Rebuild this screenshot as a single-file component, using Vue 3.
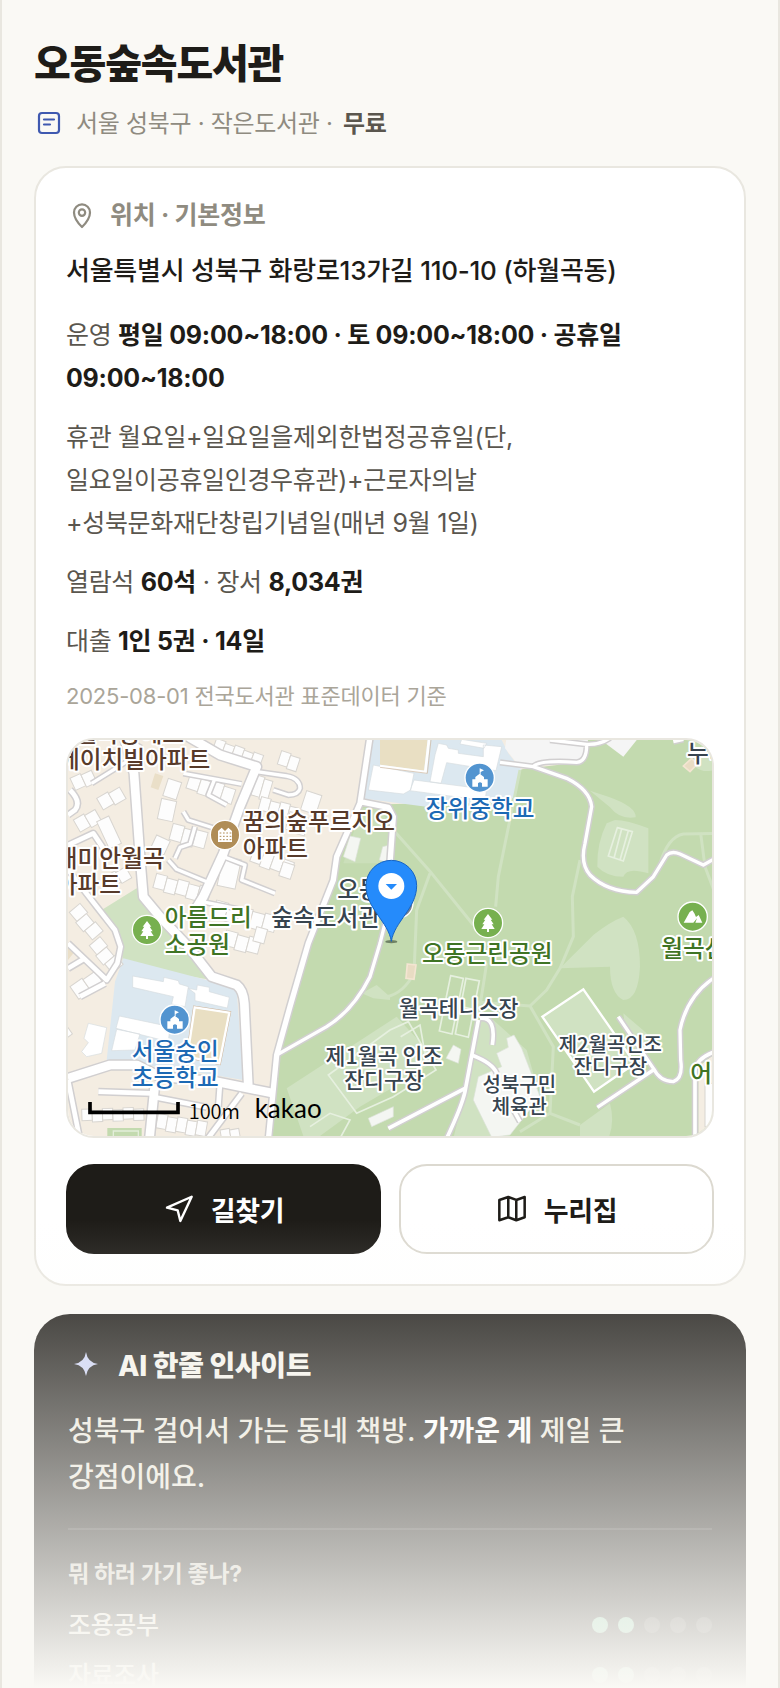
<!--src/views/LibraryDetail.vue-->
<script setup>
// Basic info rows
const library = {
  name: "오동숲속도서관",
  meta: "서울 성북구 · 작은도서관 · ",
  fee: "무료",
  address: "서울특별시 성북구 화랑로13가길 110-10 (하월곡동)",
  hours: "평일 09:00~18:00 · 토 09:00~18:00 · 공휴일 09:00~18:00",
  closed: "월요일+일요일을제외한법정공휴일(단, 일요일이공휴일인경우휴관)+근로자의날+성북문화재단창립기념일(매년 9월 1일)",
  seats: "60석",
  books: "8,034권",
  loan: "1인 5권 · 14일",
  source: "2025-08-01 전국도서관 표준데이터 기준"
};

const scores = [
  { label: "조용공부", value: 2 },
  { label: "자료조사", value: 2 }
];

// Map geometry (3 units per px)
const roads = [
  { w: 10, d: "M370 130 L545 162 M465 145 L445 195 L500 225 M370 245 L385 270 L480 300 M345 385 L360 352 L390 342 L405 290 M325 390 L350 418 L440 455 M490 380 L555 405 L545 450 L645 490 M410 512 L550 540 M95 160 L200 95 M590 125 L680 138 Q720 145 720 175 Q715 195 685 195 L640 180" },
  { w: 14, d: "M25 345 L100 310 L150 385 M30 180 Q65 215 45 240 L24 255 M25 420 L110 530 L165 600 L182 650 L172 700 L140 750 L24 640 M60 800 L135 760 M24 715 L75 685 M115 1085 L275 1090 M285 1102 L440 1132 M480 1060 L475 1130 M545 1090 L440 1230 M24 1050 L60 1230" },
  { w: 26, d: "M195 30 L222 130 L240 380 L250 500 L300 560 L385 650 L455 740 L530 765 Q550 780 553 820 L565 1070 M24 1045 L150 1005 L230 1005 L300 1040 L470 1055 L640 1090 M285 1060 L268 1230 M240 60 L205 40 M385 20 L480 75 L590 110 L540 230 L490 370 L430 500 L405 540" },
  { w: 16, d: "M930 20 L900 220 L830 380 L820 450 L745 640 L690 830 L650 975 L625 1230 M900 215 L985 232 L1000 260 L990 400" },
  { w: 10, d: "M1320 97 L1420 110 L1520 145 Q1590 180 1595 230 L1575 340 Q1560 400 1590 435 Q1640 485 1730 487 L1780 440 L1820 375 Q1835 362 1860 372 L1930 405 L1965 385 M1420 110 Q1435 90 1550 97 Q1580 95 1580 45 M1470 30 L1580 43 Q1620 45 1650 24 M1840 35 L1870 28" },
  { w: 10, d: "M650 975 L800 890 Q880 840 930 740 L960 640 L985 540 M1675 860 L1780 1015 Q1800 1055 1840 1055 Q1870 1045 1862 990 L1860 900 Q1880 800 1960 745 M1780 1020 L1612 1132" },
  { w: 11, d: "M1255 870 L1215 1085 Q1205 1130 1160 1225 M985 1195 L1215 1075 M1260 865 Q1310 860 1297 945 M1235 975 Q1300 1000 1310 1030 M1355 1130 L1380 1175 M1905 1225 L1905 1020 Q1910 985 1965 965" }
];

const paths = "M1380 120 L1315 440 L1307 530 M1000 300 L1115 430 L1240 585 M1110 430 L1070 540 L1062 730 Q1030 790 980 800 M1560 390 L1537 500 L1540 620 L1500 715 L1460 780 L1410 828 L1240 815 M1800 400 Q1825 320 1870 312 L1965 310 M1922 310 L1935 410 L1965 490 M1410 828 L1480 950 L1470 1150 L1380 1205 M1470 1150 L1560 1185 M1280 700 L1255 860";

// rows of small houses
const blocks = [
  { x: 470, y: 25, a: 20, n: 5, w: 30, h: 45 },
  { x: 665, y: 62, a: 18, n: 2, w: 30, h: 42 },
  { x: 392, y: 130, a: 18, n: 4, w: 36, h: 46 },
  { x: 590, y: 135, a: 16, n: 2, w: 26, h: 62 },
  { x: 325, y: 145, a: 18, n: 1, w: 42, h: 54 },
  { x: 305, y: 205, a: 12, n: 1, w: 46, h: 62 },
  { x: 110, y: 205, a: -30, n: 2, w: 38, h: 40 },
  { x: 605, y: 200, a: 15, n: 4, w: 30, h: 40 },
  { x: 740, y: 182, a: 18, n: 1, w: 48, h: 60 },
  { x: 690, y: 245, a: 15, n: 2, w: 30, h: 54 },
  { x: 340, y: 280, a: 15, n: 3, w: 36, h: 50 },
  { x: 290, y: 315, a: 25, n: 1, w: 45, h: 45 },
  { x: 290, y: 430, a: 15, n: 5, w: 34, h: 44 },
  { x: 490, y: 378, a: 12, n: 1, w: 55, h: 90 },
  { x: 585, y: 350, a: 20, n: 4, w: 32, h: 46 },
  { x: 670, y: 395, a: 18, n: 1, w: 36, h: 44 },
  { x: 470, y: 510, a: 15, n: 5, w: 38, h: 50 },
  { x: 500, y: 600, a: 15, n: 3, w: 36, h: 46 },
  { x: 30, y: 145, a: -25, n: 2, w: 34, h: 40 },
  { x: 40, y: 270, a: -30, n: 2, w: 36, h: 42 },
  { x: 110, y: 275, a: -25, n: 1, w: 40, h: 90 },
  { x: 60, y: 520, a: 50, n: 3, w: 36, h: 42 },
  { x: 135, y: 440, a: -30, n: 2, w: 34, h: 38 },
  { x: 30, y: 770, a: -35, n: 2, w: 44, h: 46 },
  { x: 120, y: 620, a: 50, n: 3, w: 36, h: 42 },
  { x: 0, y: 850, a: 55, n: 2, w: 36, h: 42 },
  { x: 65, y: 1138, a: -2, n: 6, w: 31, h: 34 },
  { x: 295, y: 1150, a: 10, n: 5, w: 30, h: 44 },
  { x: 480, y: 1200, a: -10, n: 2, w: 28, h: 40 },
  { x: 590, y: 590, a: 15, n: 1, w: 34, h: 44 },
  { x: 1935, y: 1060, a: 0, n: 1, w: 40, h: 130 }
];

const labels = [
  { t: "월곡동에스", x: 372, y: 36, k: "home", end: true },
  { t: "에이치빌아파트", x: 451, y: 115, k: "home", end: true },
  { t: "래미안월곡", x: 314, y: 412, k: "home", end: true },
  { t: "아파트", x: 183, y: 490, k: "home", end: true },
  { t: "꿈의숲푸르지오", x: 548, y: 301, k: "home" },
  { t: "아파트", x: 548, y: 380, k: "home" },
  { t: "아름드리", x: 314, y: 588, k: "park" },
  { t: "소공원", x: 314, y: 668, k: "park" },
  { t: "오동", x: 832, y: 505, k: "place" },
  { t: "숲속도서관", x: 634, y: 588, k: "place" },
  { t: "장위중학교", x: 1097, y: 262, k: "school" },
  { t: "누리", x: 1881, y: 97, k: "place" },
  { t: "오동근린공원", x: 1086, y: 697, k: "park" },
  { t: "월곡산", x: 1804, y: 681, k: "park" },
  { t: "월곡테니스장", x: 1017, y: 859, k: "place mid" },
  { t: "제1월곡 인조", x: 972, y: 1001, k: "place mid", mid: true },
  { t: "잔디구장", x: 972, y: 1075, k: "place mid", mid: true },
  { t: "제2월곡인조", x: 1651, y: 966, k: "place small", mid: true },
  { t: "잔디구장", x: 1651, y: 1032, k: "place small", mid: true },
  { t: "성북구민", x: 1378, y: 1087, k: "place small", mid: true },
  { t: "체육관", x: 1378, y: 1153, k: "place small", mid: true },
  { t: "어린이", x: 1891, y: 1056, k: "park" },
  { t: "서울숭인", x: 346, y: 990, k: "school", mid: true },
  { t: "초등학교", x: 346, y: 1068, k: "school", mid: true }
];

const anchor = (l) => (l.end ? "end" : l.mid ? "middle" : "start");
</script>

<template>
  <main class="sheet">
    <header class="head">
      <h1 class="head__title">{{ library.name }}</h1>
      <div class="head__meta">
        <svg class="head__icon" viewBox="0 0 28 28" fill="none" stroke="currentColor" stroke-width="2.2" stroke-linecap="round">
          <rect x="5" y="3" width="20" height="20" rx="3"/>
          <path d="M10 9.5H20M10 14.5H16"/>
        </svg>
        <span>{{ library.meta }} <b>{{ library.fee }}</b></span>
      </div>
    </header>

    <section class="card">
      <h2 class="card__head">
        <svg viewBox="0 0 32 32" fill="none" stroke="currentColor" stroke-width="2.2" stroke-linejoin="round">
          <path d="M16 28C13 25 8 20 8 13.4a8 8 0 0 1 16 0C24 20 19 25 16 28Z"/>
          <circle cx="16" cy="13.6" r="3.2"/>
        </svg>
        위치 · 기본정보
      </h2>
      <p class="card__address">{{ library.address }}</p>
      <p class="card__row">운영 <b>{{ library.hours }}</b></p>
      <p class="card__row">휴관 {{ library.closed }}</p>
      <p class="card__row">열람석 <b>{{ library.seats }}</b> · 장서 <b>{{ library.books }}</b></p>
      <p class="card__row">대출 <b>{{ library.loan }}</b></p>
      <p class="card__source">{{ library.source }}</p>

      <div class="map">
        <svg class="map__svg" viewBox="24 30 1932 1188" preserveAspectRatio="xMidYMid slice">
          <rect x="0" y="0" width="2000" height="1300" fill="#f4ede2"/>

          <!-- parks -->
          <path fill="#c3daaf" d="M905 225L1355 212L1360 150L1385 118L1575 95L1585 20H2000V1300H620L650 975L745 640L830 400Z"/>
          <path fill="#d0e2c2" d="M125 540L230 475L300 560L455 750L190 705L182 640Z"/>
          <path fill="#c3daaf" d="M142 1194H245V1230H142Z"/>
          <path fill="none" stroke="#e3eeda" stroke-width="4" d="M160 1230V1203H235V1230"/>

          <!-- school grounds -->
          <path fill="#dce8f0" d="M940 20H1320L1345 70L1383 118L1360 205L1110 232L905 205Z"/>
          <path fill="#f5f5f5" d="M1340 20H1585L1575 92L1425 105L1383 115L1335 55ZM1630 35L1690 80L1735 24H1640Z"/>
          <path fill="#dce8f0" d="M190 685L440 750L530 780L550 1050L370 1020L140 990L165 755Z"/>
          <g fill="#fff" stroke="#d6dce0" stroke-width="2">
            <path d="M1125 75L1135 40L1160 45L1165 55L1195 60V70L1270 80V45L1325 50L1308 122L1160 98L1143 160L1110 155ZM1205 28L1280 40L1272 55L1200 42ZM1062 150L1280 178L1275 212L1050 182ZM940 105L1062 130L1052 180L1030 192L925 180Z"/>
            <path d="M218 738L310 755L312 742L355 752L358 762L385 770L375 830L335 822L340 800L218 772ZM385 775L410 780L412 765L448 772V785L508 802L502 834L405 812V790ZM178 858L330 890L325 935L168 895ZM170 898L240 912L225 960L155 962ZM85 880L140 893L125 970L80 980L65 965L85 938L72 925Z"/>
          </g>
          <path fill="#e9dfc3" d="M960 20H1104L1092 122L960 104Z"/>
          <path fill="none" stroke="#fff" stroke-width="8" d="M960 108L1096 126L1108 20"/>
          <path fill="none" stroke="#cdb59c" stroke-width="2" d="M960 112L1102 130L1114 20"/>
          <path fill="#e9dfc3" stroke="#cdb59c" stroke-width="10" d="M404 832L508 848L478 1000L382 980Z"/>
          <path fill="#e9dfc3" stroke="#fff" stroke-width="7" d="M404 832L508 848L478 1000L382 980Z"/>
          <path fill="#eadfc8" d="M285 130L310 138L295 180L272 172ZM24 640L48 660L24 690Z"/>

          <!-- lighter grass -->
          <g fill="#d0e2c2">
            <path d="M1590 182L1645 200Q1730 230 1727 262Q1680 270 1650 232ZM1665 270Q1700 270 1765 295L1765 430Q1700 410 1690 440Q1640 440 1612 410Q1610 340 1640 280Z"/>
            <path d="M1500 715L1600 615Q1650 575 1690 560Q1740 600 1740 710Q1735 810 1690 810Q1650 790 1650 710Z"/>
            <path d="M680 1075L1010 860L1130 990L1020 1060L900 1130L780 1218H730ZM1260 870H1300L1400 960L1440 1100L1320 1225H1180L1235 1000ZM1690 850L1760 910L1760 1000L1700 930ZM1560 1185L1650 1120Q1665 1180 1645 1225H1560ZM905 790L950 765L990 800V810L940 805Z"/>
            <path d="M905 235L960 232L1000 310L985 400L850 400Z" opacity=".6"/>
            <path d="M1905 75Q1930 30 1960 40V120Q1930 130 1905 110Z"/>
          </g>
          <path fill="none" stroke="#d0e2c2" stroke-width="9" stroke-linejoin="round" :d="paths"/>
          <g fill="none" stroke="#e6f0df" stroke-width="5">
            <path d="M1672 293L1717 305L1690 393L1645 378ZM1685 297L1662 385M1705 302L1680 390"/>
            <path d="M1172 737L1210 745L1176 912L1138 903ZM1218 745L1258 753L1225 922L1186 912ZM1155 820L1195 828M1203 830L1240 838"/>
            <path d="M805 1035L990 900L1045 875L1128 1020L1000 1100L890 1150ZM1022 920L1080 885L1100 1000M750 1190L810 1150L870 1170L840 1225"/>
          </g>
          <path fill="#d0e2c2" stroke="#fff" stroke-width="7" d="M1447 860L1570 778L1725 1000L1602 1085Z"/>
          <path fill="#f4f6f2" stroke="#dde2da" stroke-width="2" d="M1310 970L1345 952L1340 925L1362 915L1385 955L1410 1020L1440 1100L1350 1215L1295 1222L1240 1110L1255 1040L1325 1010ZM1158 985L1180 945L1203 958L1195 1000ZM850 380L870 318L902 325L885 395ZM958 390L968 350L990 345V400ZM925 1165L1000 1130V1160L935 1190Z"/>
          <path fill="#e9dcc3" stroke="#f4e5d2" stroke-width="5" d="M1042 702L1068 705L1062 748L1038 745ZM1870 108L1895 85L1912 102L1890 125Z"/>
          <path fill="#f4ede2" d="M1915 1225V1010L1960 975V1225Z"/>

          <!-- houses -->
          <g v-for="(b, i) in blocks" :key="i" :transform="`translate(${b.x} ${b.y}) rotate(${b.a})`">
            <rect
                v-for="n in b.n"
                :key="n"
                :x="(n - 1) * b.w"
                :y="n % 2 ? 0 : 5"
                :width="b.w"
                :height="b.h"
                fill="#fdfdfd"
                stroke="#d8d5d0"
                stroke-width="3"
            />
          </g>

          <!-- roads: casing first, then surface -->
          <g fill="none" stroke="#d1cfd0" stroke-linejoin="round">
            <path v-for="(r, i) in roads" :key="i" :d="r.d" :stroke-width="r.w + 9"/>
          </g>
          <g fill="none" stroke="#fff" stroke-linejoin="round">
            <path v-for="(r, i) in roads" :key="i" :d="r.d" :stroke-width="r.w"/>
          </g>

          <!-- poi badges -->
          <g stroke="#fff" stroke-width="4">
            <circle cx="1015" cy="520" r="44" fill="#77818c"/>
            <circle cx="495" cy="315" r="44" fill="#b08d57"/>
            <circle cx="1259" cy="143" r="44" fill="#5294d0"/>
            <circle cx="344" cy="869" r="44" fill="#5294d0"/>
            <circle cx="261" cy="600" r="44" fill="#77b04f"/>
            <circle cx="1284" cy="579" r="44" fill="#77b04f"/>
            <circle cx="1898" cy="560" r="44" fill="#77b04f"/>
          </g>
          <g fill="#fff">
            <path d="M474 336V303L485 293L495 303L505 293L516 303V336Z"/>
            <path stroke="#b08d57" stroke-width="3" stroke-dasharray="5 5" d="M479 309H514M479 319H514M479 329H514"/>
            <g v-for="p in [[1259, 143], [344, 869]]" :key="p[0]" :transform="`translate(${p[0]} ${p[1]})`">
              <path d="M-22 27V5H-13V-2L0 -12L13 -2V5H24V27H7V17Q1 11 -5 17V27ZM0 -28L13 -22L3 -17V-8H0Z"/>
            </g>
            <g v-for="p in [[261, 600], [1284, 579]]" :key="p[0]" :transform="`translate(${p[0]} ${p[1]})`">
              <path d="M0 -27L13 -10H8L17 4H11L20 18H3V27H-3V18H-20L-11 4H-17L-8 -10H-13Z"/>
            </g>
            <path d="M1871 578L1889 546L1897 541L1903 550L1908 561L1916 555L1927 578H1906L1911 565L1900 578Z"/>
          </g>

          <text
              v-for="(l, i) in labels"
              :key="i"
              :x="l.x"
              :y="l.y"
              :text-anchor="anchor(l)"
              :class="['map__label', ...l.k.split(' ')]"
          >{{ l.t }}</text>

          <!-- marker -->
          <ellipse cx="994" cy="635" rx="18" ry="5" fill="#40513c" opacity=".65"/>
          <path fill="#258bfb" stroke="#1664c4" stroke-width="3" d="M994 634C985 575 918 535 918 467A76 76 0 0 1 1070 467C1070 535 1003 575 994 634Z"/>
          <circle cx="994" cy="468" r="39" fill="#fff"/>
          <path fill="#258bfb" d="M977 462H1011L994 479Z"/>

          <path fill="none" stroke="#000" stroke-width="11" d="M90 1116V1147H354V1116"/>
          <text class="map__scale" x="386" y="1168">100m</text>
          <text class="map__brand" x="584" y="1163">kakao</text>
        </svg>
      </div>

      <div class="actions">
        <a class="btn btn--dark" href="#route">
          <svg viewBox="0 0 24 24" fill="none" stroke="currentColor" stroke-width="1.8" stroke-linejoin="round">
            <path d="M3 11L21.5 2.8L13 21L11 13Z"/>
          </svg>
          길찾기
        </a>
        <a class="btn" href="#site">
          <svg viewBox="0 0 24 24" fill="none" stroke="currentColor" stroke-width="1.9" stroke-linejoin="round">
            <path d="M2.500 5.200L9.200 3L15.200 5.200L21.500 3V18.200L15.200 20.400L9.200 18.200L2.500 20.400ZM9.200 3V18.200M15.200 5.200V20.400"/>
          </svg>
          누리집
        </a>
      </div>
    </section>

    <section class="insight">
      <h2 class="insight__head">
        <svg viewBox="0 0 32 32" fill="currentColor">
          <path d="M18 2Q19.500 12.500 30 14Q19.500 15.500 18 26Q16.500 15.500 6 14Q16.500 12.500 18 2Z"/>
        </svg>
        AI 한줄 인사이트
      </h2>
      <p class="insight__text">성북구 걸어서 가는 동네 책방. <b>가까운 게</b> 제일 큰 강점이에요.</p>
      <div class="insight__scores">
        <h3>뭐 하러 가기 좋나?</h3>
        <div v-for="s in scores" :key="s.label" class="score">
          <span>{{ s.label }}</span>
          <span class="score__dots">
            <i v-for="n in 5" :key="n" :class="{ on: n <= s.value }"></i>
          </span>
        </div>
      </div>
    </section>

    <div class="fade"></div>
  </main>
</template>

<style>
body {
  margin: 0;
  background: #faf9f5;
}
</style>

<style scoped>
.sheet {
  position: relative;
  box-sizing: border-box;
  height: 100vh;
  overflow: hidden;
  padding: 38px 32px 0;
  border: 0 solid #e9e7e0;
  border-width: 0 2px;
  background: #faf9f5;
  color: #1e1c18;
  font-family: Inter, "Noto Sans CJK KR", sans-serif;
  letter-spacing: -0.02em;
  word-break: keep-all;
}
h1, h2, h3, p { margin: 0; }
b { font-weight: 700; }
svg { display: block; flex: none; }

/* Header */
.head__title {
  font-size: 40px;
  line-height: 52px;
  font-weight: 800;
  letter-spacing: -0.03em;
}
.head__meta {
  display: flex;
  align-items: center;
  gap: 14px;
  margin: 16px 0 24px;
  font-size: 24px;
  line-height: 36px;
  color: #8f8b80;
}
.head__meta b { margin-left: 4px; color: #5a564e; }
.head__icon { width: 28px; height: 28px; color: #3f59b0; }

/* Info card */
.card {
  display: flex;
  flex-direction: column;
  gap: 16px;
  padding: 30px;
  border: 2px solid #e9e7e0;
  border-radius: 32px;
  background: #fff;
}
.card__head {
  display: flex;
  align-items: center;
  gap: 12px;
  font-size: 25px;
  line-height: 34px;
  font-weight: 700;
  color: #8f8b80;
}
.card__head svg { width: 32px; height: 32px; }
.card__address {
  margin-bottom: 4px;
  font-size: 26px;
  line-height: 46px;
  font-weight: 500;
  letter-spacing: -0.01em;
}
.card__row {
  font-size: 25px;
  line-height: 43px;
  color: #5a564e;
}
.card__row b { color: #1e1c18; letter-spacing: -0.01em; }
.card__source {
  font-size: 22px;
  line-height: 34px;
  letter-spacing: -0.01em;
  color: #aaa599;
}

/* Map */
.map {
  height: 396px;
  margin-top: 9px;
  border: 2px solid #e9e7e0;
  border-radius: 28px;
  overflow: hidden;
}
.map__svg { width: 100%; height: 100%; }
.map__label {
  font-family: "Noto Sans CJK KR", sans-serif;
  font-size: 71px;
  font-weight: 500;
  letter-spacing: 0;
  paint-order: stroke;
  stroke: #fff;
  stroke-width: 12px;
  stroke-linejoin: round;
}
.home { fill: #573a2a; }
.park { fill: #3f7424; }
.place { fill: #37444f; }
.school { fill: #1c69b4; }
.mid { font-size: 65px; }
.small { font-size: 60px; }
.map__scale {
  font-family: "Noto Sans CJK KR", sans-serif;
  font-size: 60px;
  font-weight: 350;
  letter-spacing: 0;
}
.map__brand {
  font-family: Lato, sans-serif;
  font-size: 78px;
  letter-spacing: 0;
}

/* Buttons */
.actions {
  display: grid;
  grid-template-columns: 1fr 1fr;
  gap: 18px;
  margin-top: 10px;
}
.btn {
  display: flex;
  align-items: center;
  justify-content: center;
  gap: 16px;
  box-sizing: border-box;
  height: 90px;
  border: 2px solid #dcd9d0;
  border-radius: 28px;
  background: #fff;
  color: #1e1c18;
  font-size: 27px;
  font-weight: 700;
  text-decoration: none;
}
.btn svg { width: 32px; height: 32px; }
.btn--dark {
  border-color: #1e1c18;
  background: #1e1c18;
  color: #fff;
}

/* AI insight */
.insight {
  margin-top: 28px;
  padding: 34px;
  border-radius: 36px;
  background: #1e1c18;
  color: #ebe8dd;
}
.insight__head {
  display: flex;
  align-items: center;
  gap: 18px;
  font-size: 28px;
  line-height: 36px;
  font-weight: 800;
  color: #f5f3ec;
}
.insight__head svg { width: 32px; height: 32px; color: #ccd3f5; }
.insight__text {
  margin-top: 24px;
  font-size: 28px;
  line-height: 46px;
  font-weight: 500;
  letter-spacing: 0;
}
.insight__text b { color: #fff; }
.insight__scores {
  display: flex;
  flex-direction: column;
  gap: 16px;
  margin-top: 28px;
  padding-top: 26px;
  border-top: 2px solid rgba(255, 255, 255, 0.12);
}
.insight__scores h3 {
  font-size: 23px;
  line-height: 36px;
  font-weight: 700;
  color: #d2cfc4;
}
.score {
  display: flex;
  align-items: center;
  justify-content: space-between;
  font-size: 25px;
  line-height: 34px;
  font-weight: 500;
}
.score__dots { display: flex; gap: 10px; }
.score__dots i {
  width: 16px;
  height: 16px;
  border-radius: 50%;
  background: rgba(255, 255, 255, 0.18);
}
.score__dots i.on { background: #7fc9a4; }

.fade {
  position: absolute;
  left: -2px;
  right: -2px;
  bottom: 0;
  height: 468px;
  background: linear-gradient(to bottom, rgba(250, 249, 245, 0), #faf9f5);
  pointer-events: none;
}
</style>
